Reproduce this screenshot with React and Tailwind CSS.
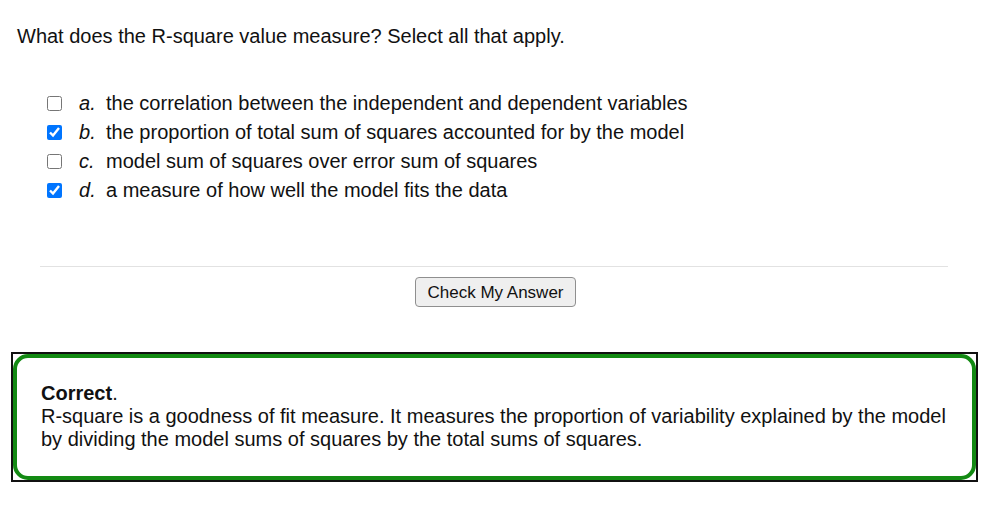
export default function App() {
  const options = [
    { key: 'a', text: 'the correlation between the independent and dependent variables', checked: false },
    { key: 'b', text: 'the proportion of total sum of squares accounted for by the model', checked: true },
    { key: 'c', text: 'model sum of squares over error sum of squares', checked: false },
    { key: 'd', text: 'a measure of how well the model fits the data', checked: true },
  ];

  return (
    <div className="w-[993px] h-[531px] bg-white text-[20px] leading-[29px] text-[#111] overflow-hidden" style={{ fontFamily: '"Liberation Sans", Arial, sans-serif' }}>
      {/* Question */}
      <p className="pl-[17px] pt-[22px]">What does the R-square value measure? Select all that apply.</p>

      {/* Options */}
      <ul className="mt-[38px] pl-[47px] flex flex-col">
        {options.map((o) => (
          <li key={o.key} className="flex items-center h-[29px]">
            <input type="checkbox" defaultChecked={o.checked} className="w-[15px] h-[15px] m-0 accent-[#0075ff]" />
            <span className="ml-[17px] italic w-[27px]">{o.key}.</span>
            <span>{o.text}</span>
          </li>
        ))}
      </ul>

      {/* Divider + button */}
      <div className="mt-[61px] mx-[40px] w-[908px] border-t border-[#e2e2e2]" />
      <div className="flex justify-center mt-[10px] pr-[2px]">
        <button className="w-[161px] h-[30px] text-[17px] leading-none rounded-[4px] border border-[#8f8f8f] bg-[#efefef] text-[#111]">
          Check My Answer
        </button>
      </div>

      {/* Feedback */}
      <div className="mt-[45px] ml-[11px] w-[967px] h-[130px] border-2 border-[#111]">
        <div className="h-full border-4 border-[#138a13] rounded-[15px] pl-[24px] pr-[20px] pt-[24px] leading-[23px]">
          <p><span className="font-bold">Correct</span>.</p>
          <p>R-square is a goodness of fit measure. It measures the proportion of variability explained by the model by dividing the model sums of squares by the total sums of squares.</p>
        </div>
      </div>
    </div>
  );
}
